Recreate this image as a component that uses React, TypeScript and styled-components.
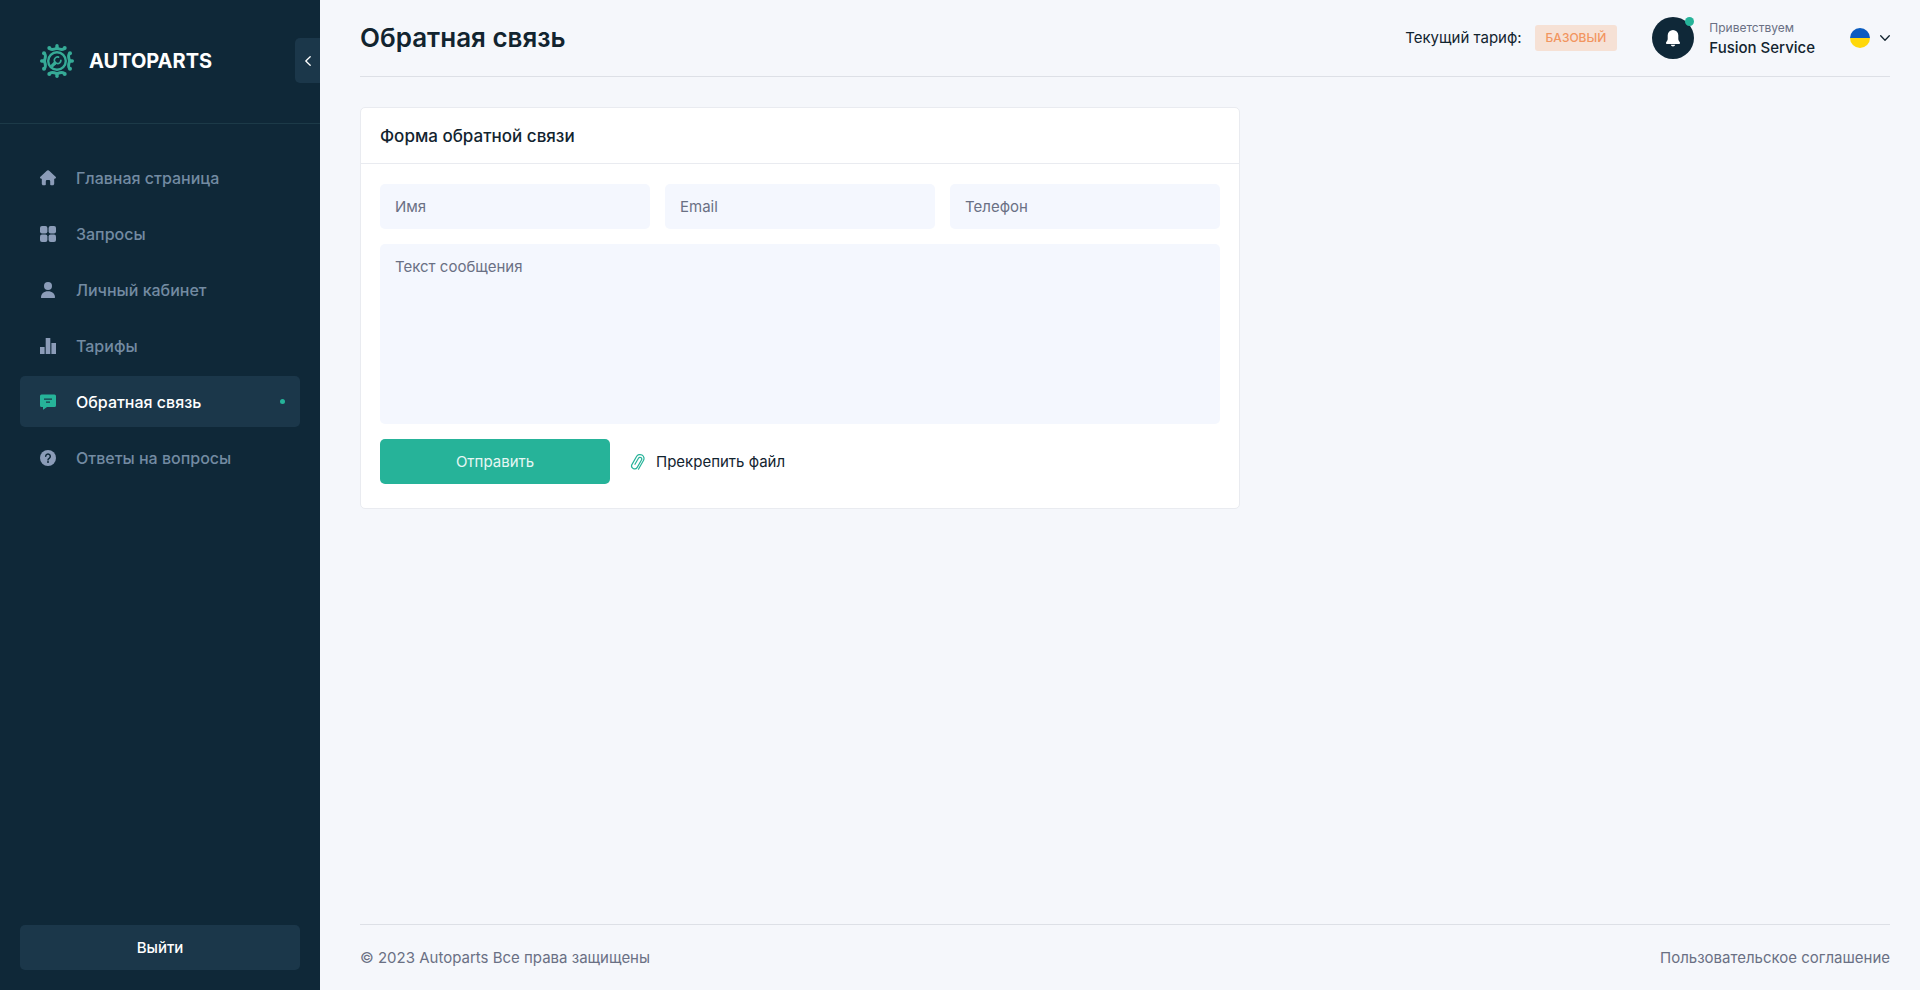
import React from "react";
import styled, { createGlobalStyle } from "styled-components";

const color = {
  night: "#0f2838",
  nightRaised: "#1b374a",
  nightLine: "#1c3a48",
  navText: "#738ba2",
  navIcon: "#8b9cb8",
  accent: "#26b399",
  ink: "#12242f",
  muted: "#6a7084",
  page: "#f5f7fb",
  line: "#dde0e6",
  card: "#ffffff",
  cardLine: "#e9ebf0",
  field: "#f4f7fe",
};

const GlobalStyle = createGlobalStyle`
  *, *::before, *::after { box-sizing: border-box; }
  body {
    margin: 0;
    background: ${color.page};
    color: ${color.ink};
    font-family: Inter, "Liberation Sans", sans-serif;
    font-size: 15px;
    line-height: 20px;
  }
  button, input, textarea { font: inherit; }
  button { cursor: pointer; }
  a { color: inherit; text-decoration: none; }
`;

const Shell = styled.div`
  display: grid;
  grid-template-columns: 320px minmax(0, 1fr);
  min-height: 100vh;
`;

const Sidebar = styled.aside`
  display: flex;
  flex-direction: column;
  background: ${color.night};
  padding-bottom: 20px;
`;

const SidebarHead = styled.div`
  display: flex;
  align-items: center;
  justify-content: space-between;
  padding: 38px 0 40px 40px;
  border-bottom: 1px solid ${color.nightLine};
`;

const Brand = styled.a`
  display: flex;
  align-items: center;
  gap: 15px;
  color: #fff;
  font-size: 20px;
  font-weight: 700;
  line-height: 24px;
`;

const CollapseButton = styled.button`
  display: grid;
  place-items: center;
  width: 25px;
  height: 45px;
  padding: 0;
  border: 0;
  border-radius: 5px 0 0 5px;
  background: ${color.nightRaised};
  color: #fff;
`;

const Nav = styled.nav`
  display: flex;
  flex-direction: column;
  gap: 5px;
  padding: 28px 20px;
`;

const NavItem = styled.a<{ $active?: boolean }>`
  display: flex;
  align-items: center;
  gap: 20px;
  height: 51px;
  padding: 0 15px 0 20px;
  border-radius: 5px;
  background: ${(p) => (p.$active ? color.nightRaised : "transparent")};
  color: ${(p) => (p.$active ? "#fff" : color.navText)};
  font-size: 16px;
  font-weight: 500;

  svg {
    color: ${(p) => (p.$active ? color.accent : color.navIcon)};
  }
`;

const ActiveDot = styled.span`
  width: 5px;
  height: 5px;
  margin-left: auto;
  border-radius: 50%;
  background: ${color.accent};
`;

const LogoutButton = styled.button`
  height: 45px;
  margin: auto 20px 0;
  border: 0;
  border-radius: 5px;
  background: ${color.nightRaised};
  color: #fff;
  font-weight: 500;
`;

const Content = styled.div`
  display: flex;
  flex-direction: column;
  padding: 0 30px 0 40px;
`;

const TopBar = styled.header`
  display: flex;
  align-items: center;
  justify-content: space-between;
  height: 77px;
  border-bottom: 1px solid ${color.line};
`;

const PageTitle = styled.h1`
  margin: 0;
  font-size: 26px;
  font-weight: 600;
  line-height: 36px;
`;

const TopBarInfo = styled.div`
  display: flex;
  align-items: center;
  gap: 35px;
`;

const Plan = styled.div`
  display: flex;
  align-items: center;
  gap: 13px;
`;

const PlanBadge = styled.span`
  padding: 0 11px;
  border-radius: 3px;
  background: #f6e1d5;
  color: #f2955f;
  font-size: 12px;
  font-weight: 500;
  line-height: 26px;
`;

const Account = styled.div`
  display: flex;
  align-items: center;
  gap: 15px;
`;

const BellButton = styled.button`
  position: relative;
  display: grid;
  place-items: center;
  width: 42px;
  height: 42px;
  padding: 0;
  border: 0;
  border-radius: 50%;
  background: ${color.night};
  color: #fff;
`;

const UnreadDot = styled.span`
  position: absolute;
  top: 0;
  right: 0;
  width: 9px;
  height: 9px;
  border-radius: 50%;
  background: ${color.accent};
`;

const Greeting = styled.div`
  color: ${color.muted};
  font-size: 12px;
`;

const AccountName = styled.div`
  font-weight: 500;
`;

const LanguageButton = styled.button`
  display: flex;
  align-items: center;
  gap: 10px;
  padding: 0;
  border: 0;
  background: none;
  color: ${color.ink};
`;

const Card = styled.section`
  width: 100%;
  max-width: 880px;
  margin-top: 30px;
  border: 1px solid ${color.cardLine};
  border-radius: 5px;
  background: ${color.card};
`;

const CardTitle = styled.h2`
  margin: 0;
  padding: 18px 19px 17px;
  border-bottom: 1px solid ${color.cardLine};
  font-size: 17px;
  font-weight: 500;
  line-height: 20px;
`;

const Form = styled.form`
  display: flex;
  flex-direction: column;
  gap: 15px;
  padding: 20px 19px 24px;
`;

const FieldRow = styled.div`
  display: grid;
  grid-template-columns: repeat(3, minmax(0, 1fr));
  gap: 15px;
`;

const TextInput = styled.input`
  width: 100%;
  height: 45px;
  padding: 0 15px;
  border: 0;
  border-radius: 5px;
  background: ${color.field};
  color: ${color.ink};

  &::placeholder {
    color: ${color.muted};
    opacity: 1;
  }
`;

const MessageInput = styled(TextInput).attrs({ as: "textarea" })`
  display: block;
  height: 180px;
  padding: 13px 15px;
  resize: none;
`;

const FormActions = styled.div`
  display: flex;
  align-items: center;
  gap: 20px;
`;

const SubmitButton = styled.button`
  width: 230px;
  height: 45px;
  border: 0;
  border-radius: 5px;
  background: ${color.accent};
  color: #e6f7f4;
`;

const AttachButton = styled.button`
  display: flex;
  align-items: center;
  gap: 10px;
  padding: 0;
  border: 0;
  background: none;
  color: ${color.ink};

  svg {
    color: ${color.accent};
  }
`;

const PageFooter = styled.footer`
  display: flex;
  align-items: center;
  justify-content: space-between;
  height: 66px;
  margin-top: auto;
  border-top: 1px solid ${color.line};
  color: ${color.muted};
`;

const LogoIcon = () => (
  <svg width="34" height="34" viewBox="-17 -17 34 34" fill="none" stroke="#36ab97" aria-hidden="true">
    {[0, 90, 180, 270].map((angle) => (
      <g key={angle} transform={`rotate(${angle})`}>
        <path d="M-7.6 -12.6Q-6 -10.6 0 -12.6Q6 -10.6 7.6 -12.6" strokeWidth="3" strokeLinejoin="round" />
        <circle cx="-7.7" cy="-13" r="2" fill="#36ab97" stroke="none" />
        <circle cx="7.7" cy="-13" r="2" fill="#36ab97" stroke="none" />
        <path d="M0 -12.5V-15.3" strokeWidth="3.4" strokeLinecap="round" />
      </g>
    ))}
    <circle r="8.8" strokeWidth="2.4" />
    <path d="M1.600 -3.900A3.300 3.300 0 1 0 3.900 -0.600" strokeWidth="1.700" strokeLinecap="round" />
    <path d="M-2 2L-4.400 4.400" strokeWidth="3.200" strokeLinecap="round" />
  </svg>
);

const NavSvg = ({ children }: { children: React.ReactNode }) => (
  <svg width="16" height="16" viewBox="0 0 16 16" fill="currentColor" aria-hidden="true">
    {children}
  </svg>
);

const HomeIcon = () => (
  <NavSvg>
    <path d="M7.1.6a1.3 1.3 0 0 1 1.8 0l6.7 6.1c.8.8.3 2-.8 2h-.6v5.1c0 .9-.6 1.5-1.5 1.5H11a.8.8 0 0 1-.8-.8v-3.2a1.2 1.2 0 0 0-1.2-1.2H7a1.2 1.2 0 0 0-1.2 1.2v3.2a.8.8 0 0 1-.8.8H3.300c-.9 0-1.5-.6-1.5-1.5V8.700h-.6c-1.100 0-1.600-1.200-.8-2z" />
  </NavSvg>
);

const GridIcon = () => (
  <NavSvg>
    <rect width="7.400" height="7.400" rx="2" />
    <rect x="8.600" width="7.400" height="7.400" rx="2" />
    <rect y="8.600" width="7.400" height="7.400" rx="2" />
    <rect x="8.600" y="8.600" width="7.400" height="7.400" rx="2" />
  </NavSvg>
);

const PersonIcon = () => (
  <NavSvg>
    <circle cx="8" cy="4" r="4" />
    <path d="M1 15.500C1 11.800 3.800 9.300 8 9.300s7 2.500 7 6.200c0 .3-.2.5-.5.5h-13a.5.5 0 0 1-.5-.5z" />
  </NavSvg>
);

const ChartIcon = () => (
  <NavSvg>
    <path d="M0 9h4.600v7H0zM5.700 0h4.600v16H5.700zM11.400 5H16v11h-4.600z" />
  </NavSvg>
);

const ChatIcon = () => (
  <NavSvg>
    <path
      fillRule="evenodd"
      d="M1.500.5h13A1.500 1.500 0 0 1 16 2v9.500a1.500 1.500 0 0 1-1.500 1.500H7l-3.400 2.600c-.3.200-.6.100-.6-.3V13H1.500A1.500 1.500 0 0 1 0 11.500V2A1.500 1.500 0 0 1 1.500.5zM4 4.500v1.200h8V4.500zM6 7.600v1.200h4V7.600z"
    />
  </NavSvg>
);

const QuestionIcon = () => (
  <NavSvg>
    <circle cx="8" cy="8" r="8" />
    <path
      d="M5.700 6.300a2.300 2.300 0 1 1 3.500 2c-.8.500-1.200.8-1.200 1.600"
      fill="none"
      stroke={color.night}
      strokeWidth="1.500"
      strokeLinecap="round"
    />
    <circle cx="8" cy="12" r="1" fill={color.night} />
  </NavSvg>
);

const BellIcon = () => (
  <svg width="16" height="17" viewBox="0 0 16 17" fill="currentColor" aria-hidden="true">
    <path d="M8 0a5.300 5.300 0 0 1 5.300 5.300v3.400c0 1.300.6 2.200 1.400 3.200.7 1 .2 2.100-1 2.100H2.300c-1.200 0-1.700-1.100-1-2.100.8-1 1.400-1.900 1.400-3.200V5.300A5.300 5.300 0 0 1 8 0zM5.800 14.800h4.400c-.3 1-1.100 1.700-2.200 1.700s-1.900-.7-2.200-1.700z" />
  </svg>
);

const ClipIcon = () => (
  <svg
    width="16"
    height="18"
    viewBox="0 0 16 18"
    fill="none"
    stroke="currentColor"
    strokeWidth="1.200"
    strokeLinecap="round"
    aria-hidden="true"
  >
    <path
      d="M4 1.500V-4A4 4 0 0 0 -4 -4V5A3 3 0 0 0 2 5V-3.500A1.500 1.500 0 0 0 -1.500 -3.500V3.500M4 1.500V6"
      transform="translate(8 9) rotate(30)"
    />
  </svg>
);

const Chevron = ({ direction }: { direction: "left" | "down" }) => (
  <svg
    width={direction === "left" ? 6 : 10}
    height={direction === "left" ? 10 : 6}
    viewBox={direction === "left" ? "0 0 6 10" : "0 0 10 6"}
    fill="none"
    stroke="currentColor"
    strokeWidth="1.300"
    strokeLinecap="round"
    strokeLinejoin="round"
    aria-hidden="true"
  >
    <path d={direction === "left" ? "M5.200 .7L.8 5L5.200 9.300" : "M.7 .8L5 5.200L9.300 .8"} />
  </svg>
);

const FlagIcon = () => (
  <svg width="20" height="20" viewBox="0 0 20 20" aria-hidden="true">
    <path d="M0 10a10 10 0 0 1 20 0z" fill="#0b5cbf" />
    <path d="M0 10a10 10 0 0 0 20 0z" fill="#ffd80a" />
  </svg>
);

const navItems = [
  { label: "Главная страница", Icon: HomeIcon },
  { label: "Запросы", Icon: GridIcon },
  { label: "Личный кабинет", Icon: PersonIcon },
  { label: "Тарифы", Icon: ChartIcon },
  { label: "Обратная связь", Icon: ChatIcon, active: true },
  { label: "Ответы на вопросы", Icon: QuestionIcon },
];

export default function App() {
  return (
    <>
      <GlobalStyle />
      <Shell>
        <Sidebar>
          <SidebarHead>
            <Brand href="#">
              <LogoIcon />
              AUTOPARTS
            </Brand>
            <CollapseButton type="button" aria-label="Свернуть меню">
              <Chevron direction="left" />
            </CollapseButton>
          </SidebarHead>
          <Nav>
            {navItems.map(({ label, Icon, active }) => (
              <NavItem key={label} href="#" $active={active} aria-current={active ? "page" : undefined}>
                <Icon />
                {label}
                {active && <ActiveDot />}
              </NavItem>
            ))}
          </Nav>
          <LogoutButton type="button">Выйти</LogoutButton>
        </Sidebar>

        <Content>
          <TopBar>
            <PageTitle>Обратная связь</PageTitle>
            <TopBarInfo>
              <Plan>
                Текущий тариф:
                <PlanBadge>БАЗОВЫЙ</PlanBadge>
              </Plan>
              <Account>
                <BellButton type="button" aria-label="Уведомления">
                  <BellIcon />
                  <UnreadDot />
                </BellButton>
                <div>
                  <Greeting>Приветствуем</Greeting>
                  <AccountName>Fusion Service</AccountName>
                </div>
              </Account>
              <LanguageButton type="button" aria-label="Язык">
                <FlagIcon />
                <Chevron direction="down" />
              </LanguageButton>
            </TopBarInfo>
          </TopBar>

          <main>
            <Card>
              <CardTitle>Форма обратной связи</CardTitle>
              <Form onSubmit={(e) => e.preventDefault()}>
                <FieldRow>
                  <TextInput type="text" placeholder="Имя" aria-label="Имя" />
                  <TextInput type="email" placeholder="Email" aria-label="Email" />
                  <TextInput type="tel" placeholder="Телефон" aria-label="Телефон" />
                </FieldRow>
                <MessageInput placeholder="Текст сообщения" aria-label="Текст сообщения" />
                <FormActions>
                  <SubmitButton type="submit">Отправить</SubmitButton>
                  <AttachButton type="button">
                    <ClipIcon />
                    Прекрепить файл
                  </AttachButton>
                </FormActions>
              </Form>
            </Card>
          </main>

          <PageFooter>
            <span>© 2023 Autoparts Все права защищены</span>
            <a href="#">Пользовательское соглашение</a>
          </PageFooter>
        </Content>
      </Shell>
    </>
  );
}
